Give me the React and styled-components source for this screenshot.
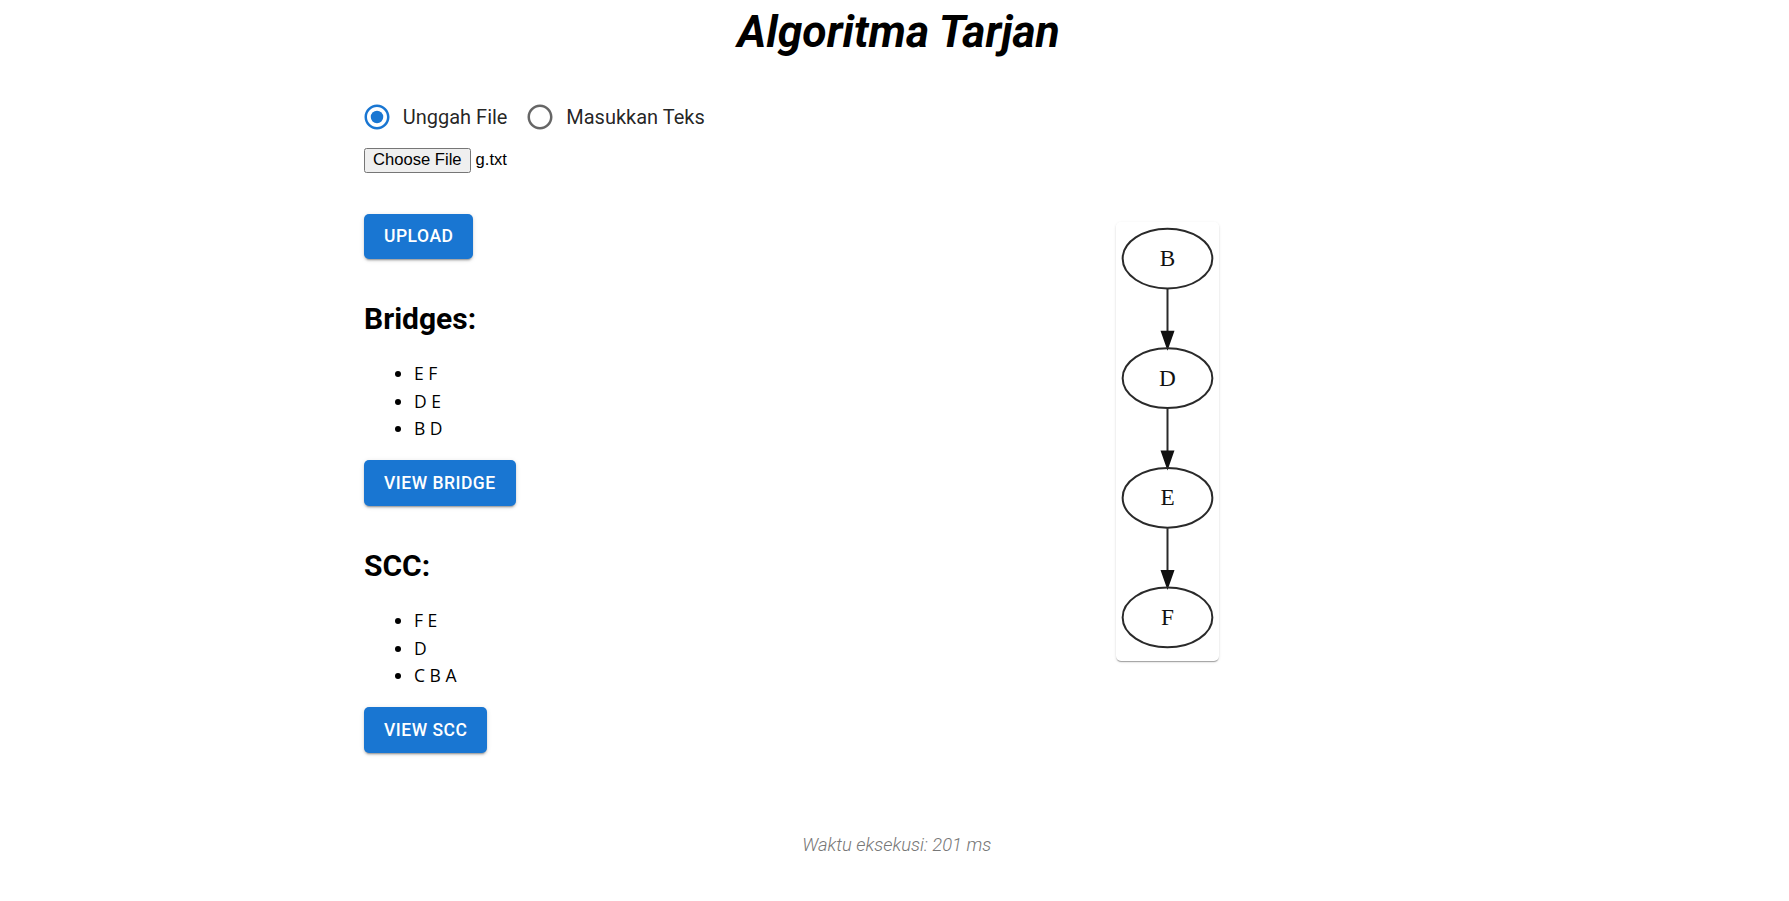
import React from "react";
import styled, { createGlobalStyle } from "styled-components";

const Global = createGlobalStyle`
  html, body { margin: 0; padding: 0; background: #fff; }
  body { font-family: Roboto, "Liberation Sans", sans-serif; color: rgba(0,0,0,0.87); }
  * { box-sizing: border-box; }
`;

const Page = styled.div`
  padding-top: 6px;
  min-height: 901px;
`;

const Title = styled.h1`
  margin: 0;
  padding-left: 8px;
  text-align: center;
  font-family: Roboto, sans-serif;
  font-weight: 700;
  font-style: italic;
  font-size: 44.5px;
  line-height: 52.5px;
  color: #000;
`;

const Container = styled.div`
  width: 1061px;
  margin: 0 auto;
`;

const RadioGroup = styled.div`
  display: flex;
  align-items: center;
  margin-top: 32.5px;
  height: 52.5px;
`;

const RadioLabel = styled.label`
  display: inline-flex;
  align-items: center;
  margin-left: -13.75px;
  margin-right: 20px;
  cursor: pointer;
`;

const RadioBox = styled.span`
  display: inline-flex;
  padding: 11.25px;
  color: ${(p) => (p.$checked ? "#1976d2" : "rgba(0,0,0,0.6)")};
`;

const LabelText = styled.span`
  font-family: Roboto, sans-serif;
  font-weight: 400;
  font-size: 20px;
  line-height: 1.5;
  color: rgba(0,0,0,0.87);
`;

const FileRow = styled.div`
  display: flex;
  align-items: center;
  margin-top: 4px;
  height: 25px;
  font-family: "Liberation Sans", Arial, sans-serif;
  font-size: 16.6px;
  color: #000;
`;

const FileButton = styled.span`
  display: inline-flex;
  align-items: center;
  height: 25px;
  padding: 0 8px;
  background: #efefef;
  border: 1px solid #767676;
  border-radius: 2.5px;
  color: #000;
`;

const FileName = styled.span`
  margin-left: 5px;
`;

const Columns = styled.div`
  display: grid;
  grid-template-columns: 1fr 1fr;
  margin-top: 41px;
`;

const LeftCol = styled.div`
  display: flex;
  flex-direction: column;
  align-items: flex-start;
`;

const RightCol = styled.div`
  display: flex;
  justify-content: center;
  align-items: flex-start;
  padding-top: 8px;
  padding-left: 14.5px;
`;

const Button = styled.button`
  display: inline-flex;
  align-items: center;
  justify-content: center;
  height: 45.6px;
  padding: 0 20px;
  border: none;
  border-radius: 5px;
  background: #1976d2;
  color: #fff;
  font-family: Roboto, sans-serif;
  font-weight: 500;
  font-size: 17.5px;
  letter-spacing: 0.02857em;
  text-transform: uppercase;
  box-shadow: 0px 3px 1px -2px rgba(0,0,0,0.2), 0px 2px 2px 0px rgba(0,0,0,0.14), 0px 1px 5px 0px rgba(0,0,0,0.12);
  cursor: pointer;
  margin-top: ${(p) => p.$mt || 0}px;
`;

const Heading = styled.h5`
  margin: ${(p) => p.$mt}px 0 0 0;
  font-family: Roboto, sans-serif;
  font-weight: 700;
  font-size: 30px;
  line-height: 40px;
  color: #000;
`;

const List = styled.ul`
  margin: 21px 0 0 0;
  padding-left: 50px;
  font-family: "Open Sans", sans-serif;
  font-size: 17.5px;
  line-height: 27.4px;
  color: #000;
`;

const Item = styled.li``;

const Card = styled.div`
  background: #fff;
  border-radius: 5px;
  padding-bottom: 7px;
  box-shadow: 0px 2px 1px -1px rgba(0,0,0,0.2), 0px 1px 1px 0px rgba(0,0,0,0.14), 0px 1px 3px 0px rgba(0,0,0,0.12);
  overflow: hidden;
`;

const GraphSvg = styled.svg`
  display: block;
`;

const Footer = styled.p`
  margin: 79px 0 0 0;
  padding-left: 4.5px;
  text-align: center;
  font-family: Roboto, sans-serif;
  font-style: italic;
  font-weight: 300;
  font-size: 18.4px;
  line-height: 25px;
  color: #777;
`;

function RadioIcon({ checked }) {
  return (
    <svg width="30" height="30" viewBox="0 0 24 24" fill="currentColor">
      <path d="M12 2C6.48 2 2 6.48 2 12s4.48 10 10 10 10-4.48 10-10S17.52 2 12 2zm0 18c-4.42 0-8-3.58-8-8s3.58-8 8-8 8 3.58 8 8-3.58 8-8 8z" />
      {checked && <circle cx="12" cy="12" r="5" />}
    </svg>
  );
}

function Radio({ checked, label }) {
  return (
    <RadioLabel>
      <RadioBox $checked={checked}>
        <RadioIcon checked={checked} />
      </RadioBox>
      <LabelText>{label}</LabelText>
    </RadioLabel>
  );
}

const nodes = ["B", "D", "E", "F"];

function Graph() {
  return (
    <GraphSvg width="103" height="432" viewBox="0 0 62 260">
      <rect x="0" y="0" width="62" height="260" fill="#fff" />
      {nodes.map((n, i) => {
        const cy = 22 + i * 72;
        return (
          <g key={n}>
            <ellipse cx="31" cy={cy} rx="27" ry="18" fill="none" stroke="#2a2a2a" strokeWidth="1.2" />
            <text
              x="31"
              y={cy + 4.6}
              textAnchor="middle"
              fontFamily="'Liberation Serif', 'Times New Roman', serif"
              fontSize="14"
              fill="#111"
            >
              {n}
            </text>
            {i < nodes.length - 1 && (
              <g>
                <path d={`M31,${cy + 18.3} L31,${cy + 44}`} stroke="#2a2a2a" strokeWidth="1.2" fill="none" />
                <polygon
                  points={`34.5,${cy + 44} 31,${cy + 54} 27.5,${cy + 44}`}
                  fill="#111"
                  stroke="#111"
                  strokeWidth="1"
                />
              </g>
            )}
          </g>
        );
      })}
    </GraphSvg>
  );
}

export default function App() {
  return (
    <Page>
      <Global />
      <Title>Algoritma Tarjan</Title>
      <Container>
        <RadioGroup>
          <Radio checked label="Unggah File" />
          <Radio label="Masukkan Teks" />
        </RadioGroup>
        <FileRow>
          <FileButton>Choose File</FileButton>
          <FileName>g.txt</FileName>
        </FileRow>
        <Columns>
          <LeftCol>
            <Button>Upload</Button>
            <Heading $mt={40.3}>Bridges:</Heading>
            <List>
              <Item>E F</Item>
              <Item>D E</Item>
              <Item>B D</Item>
            </List>
            <Button $mt={17.7}>View Bridge</Button>
            <Heading $mt={40.4}>SCC:</Heading>
            <List>
              <Item>F E</Item>
              <Item>D</Item>
              <Item>C B A</Item>
            </List>
            <Button $mt={17.7}>View SCC</Button>
          </LeftCol>
          <RightCol>
            <Card>
              <Graph />
            </Card>
          </RightCol>
        </Columns>
      </Container>
      <Footer>Waktu eksekusi: 201 ms</Footer>
    </Page>
  );
}
